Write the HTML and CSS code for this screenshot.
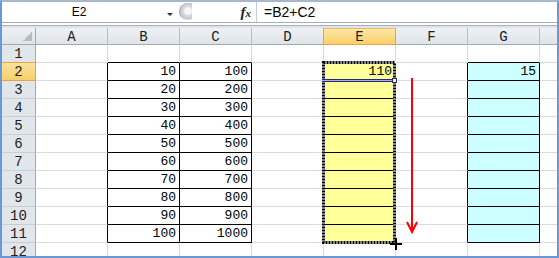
FILE: index.html
```html
<!DOCTYPE html>
<html lang="ja">
<head>
<meta charset="utf-8">
<title>Excel fill</title>
<link rel="stylesheet" href="styles.css">
</head>
<body>
<div class="win">
  <div class="fbar">
    <div class="namebox"><span class="nm">E2</span><span class="dd"></span></div>
    <div class="mid"><span class="knob"></span><span class="fx"><span class="ff">f</span><span class="fxx">x</span></span></div>
    <div class="formula">=B2+C2</div>
  </div>
  <div class="split"></div>
  <div class="sheet">
    <div class="corner"></div>
    <div class="ch">A</div><div class="ch">B</div><div class="ch">C</div><div class="ch pre">D</div><div class="ch sel">E</div><div class="ch">F</div><div class="ch">G</div><div class="ch"></div>

    <div class="rh pre">1</div>
    <div class="c"></div><div class="c bt"></div><div class="c bt"></div><div class="c"></div><div class="c bt"></div><div class="c"></div><div class="c bt"></div><div class="c"></div>

    <div class="rh sel">2</div>
    <div class="c bl"></div><div class="c bx n">10</div><div class="c bx n">100</div><div class="c bl"></div><div class="c bx y n">110</div><div class="c bl"></div><div class="c bx cy n">15</div><div class="c"></div>

    <div class="rh">3</div>
    <div class="c bl"></div><div class="c bx n">20</div><div class="c bx n">200</div><div class="c bl"></div><div class="c bx y"></div><div class="c bl"></div><div class="c bx cy"></div><div class="c"></div>

    <div class="rh">4</div>
    <div class="c bl"></div><div class="c bx n">30</div><div class="c bx n">300</div><div class="c bl"></div><div class="c bx y"></div><div class="c bl"></div><div class="c bx cy"></div><div class="c"></div>

    <div class="rh">5</div>
    <div class="c bl"></div><div class="c bx n">40</div><div class="c bx n">400</div><div class="c bl"></div><div class="c bx y"></div><div class="c bl"></div><div class="c bx cy"></div><div class="c"></div>

    <div class="rh">6</div>
    <div class="c bl"></div><div class="c bx n">50</div><div class="c bx n">500</div><div class="c bl"></div><div class="c bx y"></div><div class="c bl"></div><div class="c bx cy"></div><div class="c"></div>

    <div class="rh">7</div>
    <div class="c bl"></div><div class="c bx n">60</div><div class="c bx n">600</div><div class="c bl"></div><div class="c bx y"></div><div class="c bl"></div><div class="c bx cy"></div><div class="c"></div>

    <div class="rh">8</div>
    <div class="c bl"></div><div class="c bx n">70</div><div class="c bx n">700</div><div class="c bl"></div><div class="c bx y"></div><div class="c bl"></div><div class="c bx cy"></div><div class="c"></div>

    <div class="rh">9</div>
    <div class="c bl"></div><div class="c bx n">80</div><div class="c bx n">800</div><div class="c bl"></div><div class="c bx y"></div><div class="c bl"></div><div class="c bx cy"></div><div class="c"></div>

    <div class="rh">10</div>
    <div class="c bl"></div><div class="c bx n">90</div><div class="c bx n">900</div><div class="c bl"></div><div class="c bx y"></div><div class="c bl"></div><div class="c bx cy"></div><div class="c"></div>

    <div class="rh">11</div>
    <div class="c bl"></div><div class="c bx n">100</div><div class="c bx n">1000</div><div class="c bl"></div><div class="c bx y"></div><div class="c bl"></div><div class="c bx cy"></div><div class="c"></div>

    <div class="rh">12</div>
    <div class="c"></div><div class="c"></div><div class="c"></div><div class="c"></div><div class="c"></div><div class="c"></div><div class="c"></div><div class="c"></div>
  </div>
  <svg class="overlay" width="559" height="258" viewBox="0 0 559 258" aria-hidden="true">
    <rect x="323.5" y="62.5" width="71" height="180" fill="none" stroke="#fff" stroke-width="3"/>
    <rect x="323.5" y="62.5" width="71" height="180" fill="none" stroke="#000" stroke-width="3" stroke-dasharray="2 1"/>
    <rect x="322" y="79" width="71" height="3" fill="#1e2a78"/>
    <rect x="322" y="80" width="71" height="1" fill="#a9b3e0"/>
    <rect x="392.5" y="78.5" width="4" height="4" fill="#fff" stroke="#1e2a78"/>
    <line x1="412" y1="78" x2="412" y2="231" stroke="#ff0000" stroke-width="2"/>
    <polyline points="407,222 412,232 417,222" fill="none" stroke="#ff0000" stroke-width="2"/>
    <rect x="390" y="243" width="12" height="2" fill="#000"/>
    <rect x="395" y="238" width="2" height="12" fill="#000"/>
  </svg>
</div>
</body>
</html>
```

FILE: styles.css
```css
html, body {
  margin: 0;
  padding: 0;
  background: #fff;
}

.win {
  position: relative;
  width: 559px;
  height: 258px;
  box-sizing: border-box;
  border: 2px solid #6a98d6;
  border-top: 2px solid #a8b8cc;
  background: #fff;
  overflow: hidden;
  font-family: "Liberation Sans", Arial, sans-serif;
}

/* formula bar */
.fbar {
  display: flex;
  height: 20px;
  background: #fff;
}

.namebox {
  display: flex;
  width: 174px;
}

.nm {
  flex: 1;
  text-align: center;
  font-size: 12px;
  line-height: 20px;
  padding-left: 0;
  color: #000;
  margin-right: 11px;
}

.dd {
  align-self: flex-start;
  margin-top: 11px;
  margin-right: 3px;
  width: 0;
  height: 0;
  border-left: 3px solid transparent;
  border-right: 3px solid transparent;
  border-top: 3px solid #333;
}

.mid {
  display: flex;
  align-items: flex-start;
  width: 80px;
}

.knob {
  margin-left: 3px;
  margin-top: 1px;
  width: 13px;
  height: 17px;
  box-sizing: border-box;
  border-radius: 9px 0 0 9px / 9px 0 0 9px;
  border-left: 1px solid #9ea3a9;
  background: radial-gradient(circle at 8px 8px, #f6f6f6 0 3px, #d6d8db 5px, #c2c6cb 8px, #e9ebed 9px);
}

.fx {
  margin-left: auto;
  margin-right: 5px;
  margin-top: 2px;
  font-family: "Liberation Serif", "Times New Roman", serif;
  font-style: italic;
  font-weight: bold;
  color: #222;
  line-height: 16px;
}

.ff {
  font-size: 15px;
}

.fxx {
  font-size: 11px;
}

.formula {
  flex: 1;
  border-left: 1px solid #c6cdd6;
  padding-left: 7px;
  font-size: 14px;
  line-height: 21px;
  color: #000;
  white-space: nowrap;
}

.split {
  height: 6px;
  background: linear-gradient(#a6b0bd 0 1px, #fff 1px 3px, #a6b0bd 3px 4px, #dfe4ea 4px 6px);
}

/* sheet grid */
.sheet {
  display: grid;
  grid-template-columns: 34px repeat(7, 72px) 72px;
  grid-template-rows: 17px repeat(11, 18px) 18px;
}

.sheet > div {
  box-sizing: border-box;
  border-right: 1px solid #d9dcdf;
  border-bottom: 1px solid #d9dcdf;
  display: flex;
  overflow: hidden;
}

.corner {
  background:
    linear-gradient(135deg, transparent 0 50%, #b6bcc4 50%) right 3px bottom 3px / 9px 9px no-repeat,
    linear-gradient(#eef1f4, #dfe4e9);
  border-right-color: #9eaab8 !important;
  border-bottom-color: #9eaab8 !important;
}

.ch {
  justify-content: center;
  align-items: center;
  font-family: "Liberation Mono", "Courier New", monospace;
  font-size: 14px;
  color: #222;
  background: linear-gradient(#eef1f4, #dfe4e9);
  border-right-color: #b7bec7 !important;
  border-bottom-color: #9eaab8 !important;
  line-height: 16px;
  padding-top: 2px;
}

.ch.pre {
  border-right-color: #e8a24a !important;
}

.ch.sel {
  background: linear-gradient(#fde9a8, #f8d06c);
  border-right-color: #e8a24a !important;
  border-bottom-color: #e8a24a !important;
  box-shadow: inset 0 1px 0 #f0b860;
}

.rh {
  justify-content: center;
  align-items: flex-end;
  font-family: "Liberation Mono", "Courier New", monospace;
  font-size: 14px;
  line-height: 16px;
  color: #222;
  background: #e1e6eb;
  border-right-color: #9eaab8 !important;
  border-bottom-color: #c7ced6 !important;
}

.rh.pre {
  border-bottom-color: #e8a24a !important;
}

.rh.sel {
  background: linear-gradient(#fbe29c, #f7cf6a);
  border-right-color: #e8a24a !important;
  border-bottom-color: #e8a24a !important;
}

.c {
  font-family: "Liberation Mono", "Courier New", monospace;
  font-size: 13px;
  line-height: 16px;
  color: #000;
  align-items: flex-end;
}

.n {
  justify-content: flex-end;
  padding-right: 3px;
}

.bx {
  border-right-color: #000 !important;
  border-bottom-color: #000 !important;
}

.bl {
  border-right-color: #000 !important;
}

.bt {
  border-bottom-color: #000 !important;
}

.y {
  background: #ffff99;
}

.cy {
  background: #ccffff;
}

.overlay {
  position: absolute;
  left: -2px;
  top: -2px;
  pointer-events: none;
}
```
